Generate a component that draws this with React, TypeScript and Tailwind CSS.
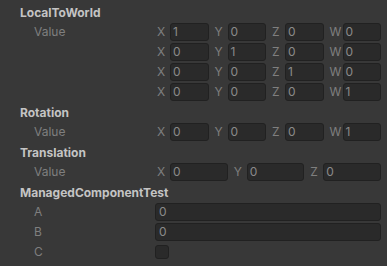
import React from 'react';

const font = { fontFamily: 'Inter, "Noto Sans", sans-serif' };

const Field: React.FC<{ label: string; value: string }> = ({ label, value }) => (
  <div className="flex items-center min-w-0">
    <span className="w-[15px] shrink-0 pl-[2px] text-[#7f7f7f] leading-[18px]">{label}</span>
    <div className="flex-1 min-w-0 h-[18px] rounded-[3px] bg-[#2a2a2a] border border-[#212121] pl-[2px] leading-[16px] text-[#8a8a8a]">
      {value}
    </div>
  </div>
);

const Header: React.FC<{ title: string }> = ({ title }) => (
  <div className="h-5 pl-[20px] flex items-center font-bold text-[#c4c4c4]">{title}</div>
);

const Row: React.FC<{ label?: string; children?: React.ReactNode }> = ({ label, children }) => (
  <div className="h-5 flex items-start">
    <div className="w-[155px] shrink-0 pl-[34px] leading-[18px] text-[#7f7f7f]">{label}</div>
    <div className="flex-1 pr-[6px]">{children}</div>
  </div>
);

const Vec4: React.FC<{ v: string[] }> = ({ v }) => (
  <div className="grid grid-cols-4 gap-[4px]">
    {['X', 'Y', 'Z', 'W'].map((l, i) => (
      <Field key={l} label={l} value={v[i]} />
    ))}
  </div>
);

const App: React.FC = () => {
  const matrix = [
    ['1', '0', '0', '0'],
    ['0', '1', '0', '0'],
    ['0', '0', '1', '0'],
    ['0', '0', '0', '1'],
  ];

  return (
    <div className="w-[387px] h-[266px] bg-[#383838] pt-[3px] text-[12px] overflow-hidden" style={font}>
      <Header title="LocalToWorld" />
      {matrix.map((r, i) => (
        <Row key={i} label={i === 0 ? 'Value' : undefined}>
          <Vec4 v={r} />
        </Row>
      ))}

      <Header title="Rotation" />
      <Row label="Value">
        <Vec4 v={['0', '0', '0', '1']} />
      </Row>

      <Header title="Translation" />
      <Row label="Value">
        <div className="grid grid-cols-3 gap-[4px]">
          <Field label="X" value="0" />
          <Field label="Y" value="0" />
          <Field label="Z" value="0" />
        </div>
      </Row>

      <Header title="ManagedComponentTest" />
      <Row label="A">
        <div className="h-[18px] rounded-[3px] bg-[#2a2a2a] border border-[#212121] pl-[3px] leading-[16px] text-[#8a8a8a]">0</div>
      </Row>
      <Row label="B">
        <div className="h-[18px] rounded-[3px] bg-[#2a2a2a] border border-[#212121] pl-[3px] leading-[16px] text-[#8a8a8a]">0</div>
      </Row>
      <Row label="C">
        <div className="mt-[2px] w-[14px] h-[14px] rounded-[3px] bg-[#2a2a2a] border border-[#212121]" />
      </Row>
    </div>
  );
};

export default App;
